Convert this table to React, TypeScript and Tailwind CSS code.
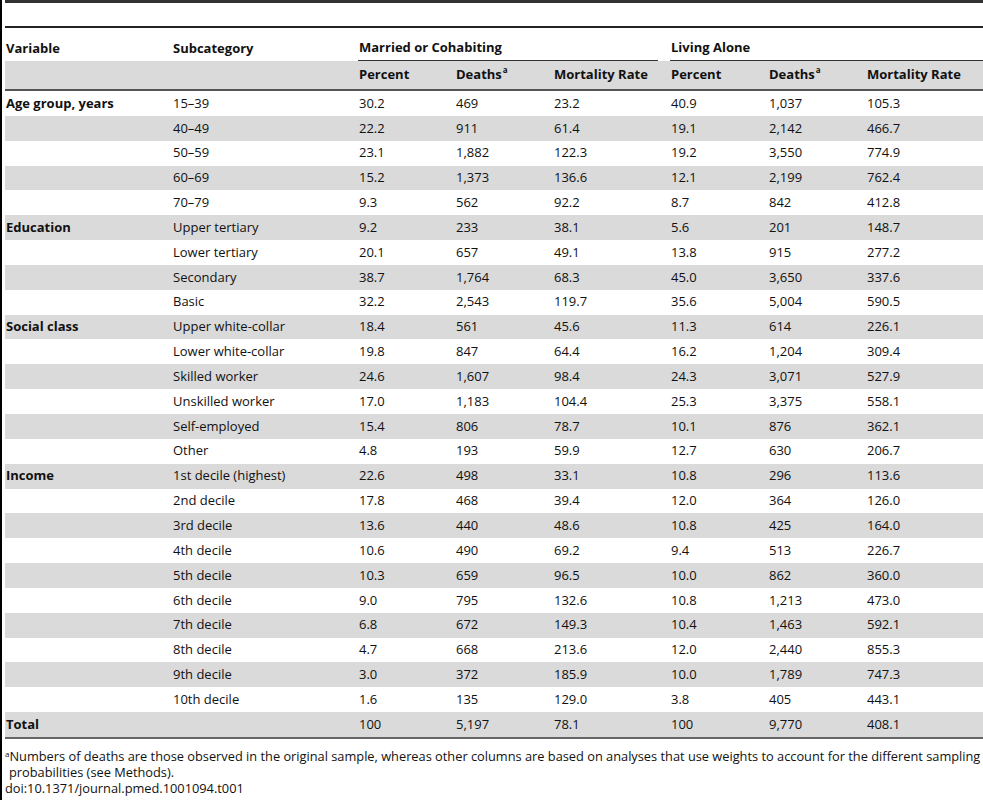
type Row = { variable?: string; sub: string; values: string[] };

const rows: Row[] = [
  { variable: "Age group, years", sub: "15–39", values: ["30.2", "469", "23.2", "40.9", "1,037", "105.3"] },
  { sub: "40–49", values: ["22.2", "911", "61.4", "19.1", "2,142", "466.7"] },
  { sub: "50–59", values: ["23.1", "1,882", "122.3", "19.2", "3,550", "774.9"] },
  { sub: "60–69", values: ["15.2", "1,373", "136.6", "12.1", "2,199", "762.4"] },
  { sub: "70–79", values: ["9.3", "562", "92.2", "8.7", "842", "412.8"] },
  { variable: "Education", sub: "Upper tertiary", values: ["9.2", "233", "38.1", "5.6", "201", "148.7"] },
  { sub: "Lower tertiary", values: ["20.1", "657", "49.1", "13.8", "915", "277.2"] },
  { sub: "Secondary", values: ["38.7", "1,764", "68.3", "45.0", "3,650", "337.6"] },
  { sub: "Basic", values: ["32.2", "2,543", "119.7", "35.6", "5,004", "590.5"] },
  { variable: "Social class", sub: "Upper white-collar", values: ["18.4", "561", "45.6", "11.3", "614", "226.1"] },
  { sub: "Lower white-collar", values: ["19.8", "847", "64.4", "16.2", "1,204", "309.4"] },
  { sub: "Skilled worker", values: ["24.6", "1,607", "98.4", "24.3", "3,071", "527.9"] },
  { sub: "Unskilled worker", values: ["17.0", "1,183", "104.4", "25.3", "3,375", "558.1"] },
  { sub: "Self-employed", values: ["15.4", "806", "78.7", "10.1", "876", "362.1"] },
  { sub: "Other", values: ["4.8", "193", "59.9", "12.7", "630", "206.7"] },
  { variable: "Income", sub: "1st decile (highest)", values: ["22.6", "498", "33.1", "10.8", "296", "113.6"] },
  { sub: "2nd decile", values: ["17.8", "468", "39.4", "12.0", "364", "126.0"] },
  { sub: "3rd decile", values: ["13.6", "440", "48.6", "10.8", "425", "164.0"] },
  { sub: "4th decile", values: ["10.6", "490", "69.2", "9.4", "513", "226.7"] },
  { sub: "5th decile", values: ["10.3", "659", "96.5", "10.0", "862", "360.0"] },
  { sub: "6th decile", values: ["9.0", "795", "132.6", "10.8", "1,213", "473.0"] },
  { sub: "7th decile", values: ["6.8", "672", "149.3", "10.4", "1,463", "592.1"] },
  { sub: "8th decile", values: ["4.7", "668", "213.6", "12.0", "2,440", "855.3"] },
  { sub: "9th decile", values: ["3.0", "372", "185.9", "10.0", "1,789", "747.3"] },
  { sub: "10th decile", values: ["1.6", "135", "129.0", "3.8", "405", "443.1"] },
  { variable: "Total", sub: "", values: ["100", "5,197", "78.1", "100", "9,770", "408.1"] },
];

const cols = "grid grid-cols-[167px_186px_97px_98px_117px_98px_98px_117px]";

const Sup = () => <sup className="text-[8px] font-bold ml-px -top-[6px]">a</sup>;

export default function App() {
  return (
    <div
      className="h-[800px] w-[983px] bg-white border-l-2 border-black pl-[3px] text-[13px] text-[#111]"
      style={{ fontFamily: '"Open Sans", "DejaVu Sans", sans-serif' }}
    >
      <div className="h-[3px] bg-[#333]" />
      <div className="h-[23px]" />
      <div className="h-[2px] bg-[#222]" />

      {/* header, first line */}
      <div className={`${cols} h-[33px] font-bold`}>
        <div className="pl-px self-end pb-[3px]">Variable</div>
        <div className="pl-px self-end pb-[3px]">Subcategory</div>
        <div className="col-span-3 pl-px mr-[12px] self-end pb-[3px] border-b-[1.5px] border-[#333]">
          Married or Cohabiting
        </div>
        <div className="col-span-3 pl-px self-end pb-[3px] border-b-[1.5px] border-[#333]">Living Alone</div>
      </div>

      {/* header, second line */}
      <div className={`${cols} h-[28px] items-center bg-[#dadada] font-bold`}>
        <div />
        <div />
        <div className="pl-px">Percent</div>
        <div className="pl-px">
          Deaths
          <Sup />
        </div>
        <div className="pl-px">Mortality Rate</div>
        <div className="pl-px">Percent</div>
        <div className="pl-px">
          Deaths
          <Sup />
        </div>
        <div className="pl-px">Mortality Rate</div>
      </div>
      <div className="h-[2px] bg-[#555]" />

      {rows.map((r, i) => (
        <div
          key={i}
          className={`${cols} h-[24.85px] items-center ${i % 2 === 1 ? "bg-[#dadada]" : "bg-white"}`}
        >
          <div className="pl-px font-bold">{r.variable}</div>
          <div className="pl-px">{r.sub}</div>
          {r.values.map((v, j) => (
            <div key={j} className="pl-px">
              {v}
            </div>
          ))}
        </div>
      ))}
      <div className="h-[2px] bg-[#666]" />

      <div className="pt-[9px] leading-[16px] text-[12.8px]">
        <p className="pl-[4px] -indent-[4px]">
          <sup className="text-[8px] -top-[4px]">a</sup>
          <span className="whitespace-nowrap">
            Numbers of deaths are those observed in the original sample, whereas other columns are based on analyses
            that use weights to account for the different sampling
          </span>
          <br />
          probabilities (see Methods).
        </p>
        <p>doi:10.1371/journal.pmed.1001094.t001</p>
      </div>
    </div>
  );
}
